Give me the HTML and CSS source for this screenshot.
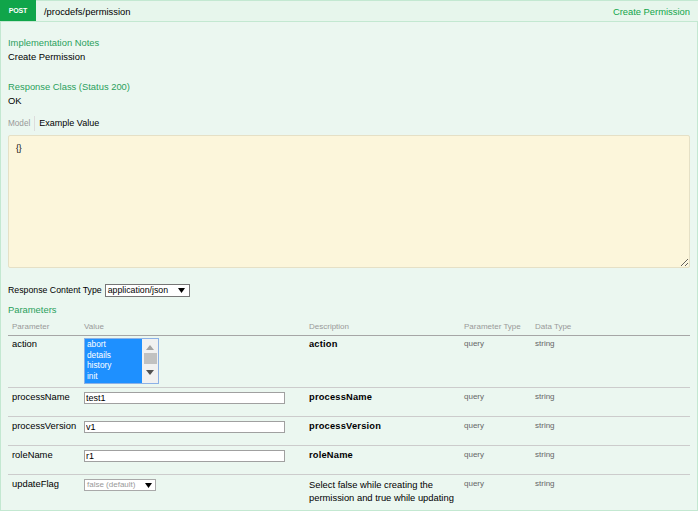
FILE: index.html
```html
<!DOCTYPE html>
<html>
<head>
<meta charset="utf-8">
<link rel="stylesheet" href="styles.css">
</head>
<body>
<div class="op">
  <div class="op-head">
    <span class="method">POST</span>
    <span class="path">/procdefs/permission</span>
    <span class="summary">Create Permission</span>
  </div>
  <div class="op-body">
    <h4 class="sec first">Implementation Notes</h4>
    <p class="txt">Create Permission</p>
    <h4 class="sec gap16">Response Class (Status 200)</h4>
    <p class="txt">OK</p>
    <div class="tabs"><span class="tab-model">Model</span><span class="tab-ex">Example Value</span></div>
    <textarea class="sample" readonly>{}</textarea>
    <div class="ctype">Response Content Type <span class="sel sel-ct">application/json<svg class="arr" width="7" height="5" viewBox="0 0 7 5"><path d="M0 0H7L3.5 5Z" fill="#000"/></svg></span></div>
    <h4 class="sec gap6">Parameters</h4>
    <table class="params">
      <colgroup><col class="c1"><col class="c2"><col class="c3"><col class="c4"><col class="c5"></colgroup>
      <thead>
        <tr><th>Parameter</th><th>Value</th><th>Description</th><th>Parameter Type</th><th>Data Type</th></tr>
      </thead>
      <tbody>
        <tr class="r-action">
          <td class="name">action</td>
          <td>
            <div class="listbox">
              <div class="opts"><div>abort</div><div>details</div><div>history</div><div>init</div></div>
              <div class="sb">
                <svg class="sb-up" width="8" height="5" viewBox="0 0 8 5"><path d="M0 5H8L4 0Z" fill="#a3a3a3"/></svg>
                <div class="thumb"></div>
                <svg class="sb-down" width="8" height="5" viewBox="0 0 8 5"><path d="M0 0H8L4 5Z" fill="#505050"/></svg>
              </div>
            </div>
          </td>
          <td class="desc"><b>action</b></td>
          <td class="small">query</td>
          <td class="small">string</td>
        </tr>
        <tr>
          <td class="name">processName</td>
          <td><input class="inp" type="text" value="test1" readonly></td>
          <td class="desc"><b>processName</b></td>
          <td class="small">query</td>
          <td class="small">string</td>
        </tr>
        <tr>
          <td class="name">processVersion</td>
          <td><input class="inp" type="text" value="v1" readonly></td>
          <td class="desc"><b>processVersion</b></td>
          <td class="small">query</td>
          <td class="small">string</td>
        </tr>
        <tr>
          <td class="name">roleName</td>
          <td><input class="inp" type="text" value="r1" readonly></td>
          <td class="desc"><b>roleName</b></td>
          <td class="small">query</td>
          <td class="small">string</td>
        </tr>
        <tr class="last">
          <td class="name">updateFlag</td>
          <td><span class="sel sel-flag">false (default)<svg class="arr" width="7" height="5" viewBox="0 0 7 5"><path d="M0 0H7L3.5 5Z" fill="#000"/></svg></span></td>
          <td class="desc multi">Select false while creating the permission and true while updating</td>
          <td class="small">query</td>
          <td class="small">string</td>
        </tr>
      </tbody>
    </table>
  </div>
</div>
</body>
</html>
```
FILE: styles.css
```css
html, body {
  margin: 0;
  padding: 0;
  background: #ffffff;
}
body {
  font-family: "Liberation Sans", Arial, sans-serif;
  font-size: 9.4px;
  color: #000;
}
.op {
  width: 698px;
  box-sizing: border-box;
  border: 1px solid #c3e8d1;
  border-top: 0;
  background: #ebf7f0;
  height: 511px;
}
.op-head {
  display: flex;
  align-items: center;
  height: 20px;
  background: #e7f6ec;
  border-top: 1px solid #c3e8d1;
  border-bottom: 1px solid #c3e8d1;
  margin: 0 -1px;
}
.method {
  background: #10a54a;
  color: #fff;
  font-size: 7px;
  font-weight: bold;
  width: 36px;
  height: 21px;
  margin-top: -1px;
  line-height: 21px;
  text-align: center;
  letter-spacing: -0.2px;
}
.path {
  margin-left: 8px;
  flex: 1;
}
.summary {
  color: #10a54a;
  margin-right: 8px;
}
.op-body {
  padding: 14px 7px 0 7px;
}
.sec {
  margin: 0;
  font-weight: normal;
  color: #2a9f5c;
  line-height: 14px;
  font-size: 9.4px;
}
.gap16 { margin-top: 16px; }
.gap6 { margin-top: 6px; }
.txt {
  margin: 0;
  line-height: 14px;
}
.tabs {
  margin-top: 8px;
  display: flex;
  align-items: center;
  height: 14px;
}
.tab-model {
  color: #999;
  font-size: 8.2px;
  padding-right: 4px;
  border-right: 1px solid #ddd;
  line-height: 15px;
}
.tab-ex {
  padding-left: 4px;
  font-size: 9px;
}
.sample {
  display: block;
  margin-top: 5px;
  width: 682px;
  height: 133px;
  box-sizing: border-box;
  background: #fcf6db;
  border: 1px solid #e5e0c6;
  border-radius: 2px;
  padding: 7px 7px;
  font-family: "Liberation Sans", Arial, sans-serif;
  font-size: 8.5px;
  color: #000;
  outline: none;
}
.ctype {
  margin-top: 15px;
  line-height: 14px;
  display: flex;
  align-items: center;
  font-size: 8.75px;
}
.sel {
  display: inline-flex;
  align-items: center;
  box-sizing: border-box;
  background: #fff;
}
.sel-ct {
  margin-left: 3px;
  width: 85px;
  height: 13px;
  border: 1px solid #767676;
  padding-left: 2px;
  font-size: 8.75px;
}
.sel-ct .arr { margin-left: auto; margin-right: 4px; }
.sel-flag {
  width: 72px;
  height: 12px;
  border: 1px solid #a9a9a9;
  padding-left: 2px;
  font-size: 8px;
  color: #999;
  margin-top: 1px;
}
.sel-flag .arr { margin-left: auto; margin-right: 3px; }
.params {
  margin-top: 1px;
  width: 682px;
  table-layout: fixed;
  border-collapse: collapse;
}
.c1 { width: 72px; }
.c2 { width: 225px; }
.c3 { width: 155px; }
.c4 { width: 71px; }
.c5 { width: 159px; }
.params th {
  text-align: left;
  font-weight: normal;
  font-size: 8px;
  color: #999;
  line-height: 12px;
  padding: 3px 4px 2px;
  border-bottom: 1px solid #a6a6a6;
}
.params td {
  vertical-align: top;
  padding: 3px 4px 12px;
  line-height: 12px;
  border-bottom: 1px solid #ccc;
}
.params tr.r-action td {
  padding: 2px 4px 3px;
}
.params tr.last td {
  border-bottom: 0;
  padding-bottom: 6px;
}
.params td.small {
  font-size: 8px;
  color: #666;
}
.params td.desc b {
  font-size: 9.3px;
  letter-spacing: 0.2px;
}
.params td.multi {
  line-height: 13px;
}
.listbox {
  display: flex;
  width: 75px;
  height: 46px;
  box-sizing: border-box;
  border: 1px solid #8cb1e6;
  background: #fff;
}
.opts {
  flex: 1;
  background: #1e90ff;
  color: #fff;
  font-size: 8.3px;
  line-height: 10.6px;
  padding: 0 0 0 2px;
}
.sb {
  width: 16px;
  background: #f1f1f1;
  display: flex;
  flex-direction: column;
  align-items: center;
  padding-top: 6px;
  box-sizing: border-box;
}
.thumb {
  width: 13px;
  height: 11px;
  background: #c1c1c1;
  margin-top: 3px;
}
.sb-down { margin-top: 6px; }
.inp {
  display: block;
  width: 201px;
  height: 12px;
  box-sizing: border-box;
  border: 1px solid #a0a0a0;
  padding: 0 1px;
  margin: 1px 0 0;
  font-family: "Liberation Sans", Arial, sans-serif;
  font-size: 9px;
  color: #000;
  background: #fff;
  outline: none;
}
```
